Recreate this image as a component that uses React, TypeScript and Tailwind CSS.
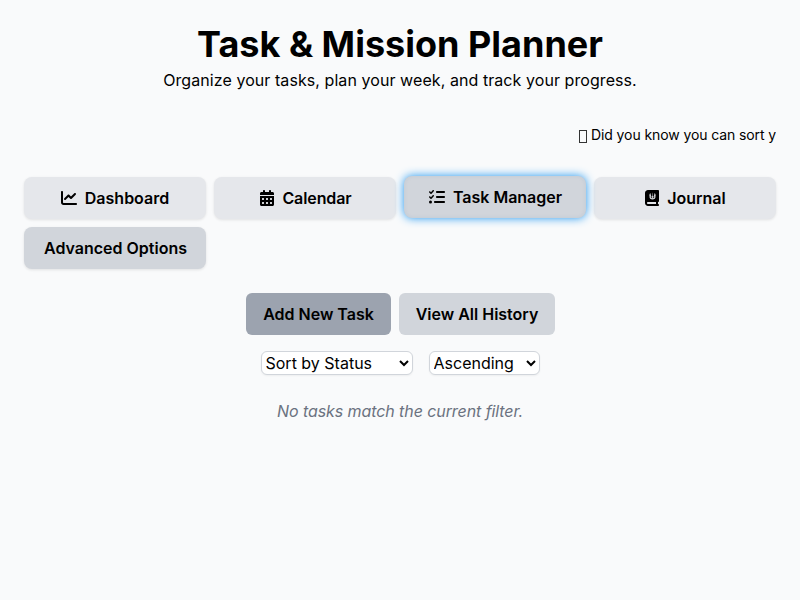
import React from "react";
import { FaBookJournalWhills, FaCalendarDays, FaChartLine, FaListCheck } from "react-icons/fa6";

const tab = "flex h-[42px] items-center justify-center rounded-lg font-semibold";
const raised = "shadow-[0_1px_3px_rgba(0,0,0,0.1)]";

export default function App() {
  return (
    <div className="min-h-screen overflow-hidden bg-[#f9fafb] p-6 font-['Inter',sans-serif] text-base text-black">
      <header className="mb-8 text-center">
        <h1 className="text-4xl leading-10 font-bold">Task &amp; Mission Planner</h1>
        <p className="mt-1 tracking-[0.07px]">Organize your tasks, plan your week, and track your progress.</p>
      </header>
      <div className="mb-8 flex h-[21px] items-end justify-end overflow-hidden text-sm whitespace-nowrap">
        <div className="flex w-[197px] items-center overflow-hidden">
          <span className="mt-[2px] mr-[4px] h-[13px] w-[8px] shrink-0 border border-[#333]" />
          <span className="tracking-[-0.1px]">Did you know you can sort y</span>
        </div>
      </div>
      <nav className="mb-6 grid grid-cols-4 gap-2">
        <button className={`${tab} ${raised} bg-[#e5e7eb]`}><FaChartLine className="mr-2" />Dashboard</button>
        <button className={`${tab} ${raised} bg-[#e5e7eb] tracking-[-0.1px]`}><FaCalendarDays className="mr-[7px] ml-px" />Calendar</button>
        <button className={`${tab} -translate-y-px bg-[#d1d5db] pl-px shadow-[0_0_10px_#1e96f0,inset_0_0_4px_rgba(30,100,160,0.1)]`}><FaListCheck className="mr-2" />Task Manager</button>
        <button className={`${tab} ${raised} bg-[#e5e7eb] pr-px`}><FaBookJournalWhills className="mr-[7px] ml-px" />Journal</button>
        <button className={`${tab} ${raised} bg-[#d1d5db] pl-px`}>Advanced Options</button>
      </nav>
      <div className="mb-4 flex justify-center gap-2">
        <button className="h-[42px] w-[145px] rounded-md bg-[#9ca3af] pl-px font-semibold">Add New Task</button>
        <button className="h-[42px] w-[156px] rounded-md bg-[#d1d5db] pl-px font-semibold">View All History</button>
      </div>
      <div className="mb-6 flex justify-center gap-4">
        <select className="h-6 w-[152px] rounded-md border border-[#d1d5db] bg-white shadow-[0_1px_2px_rgba(0,0,0,0.05)]"><option>Sort by Status</option></select>
        <select className="h-6 w-[111px] rounded-md border border-[#d1d5db] bg-white shadow-[0_1px_2px_rgba(0,0,0,0.05)]"><option>Ascending</option></select>
      </div>
      <p className="text-center tracking-[-0.08px] text-[#6b7280] italic">No tasks match the current filter.</p>
    </div>
  );
}
